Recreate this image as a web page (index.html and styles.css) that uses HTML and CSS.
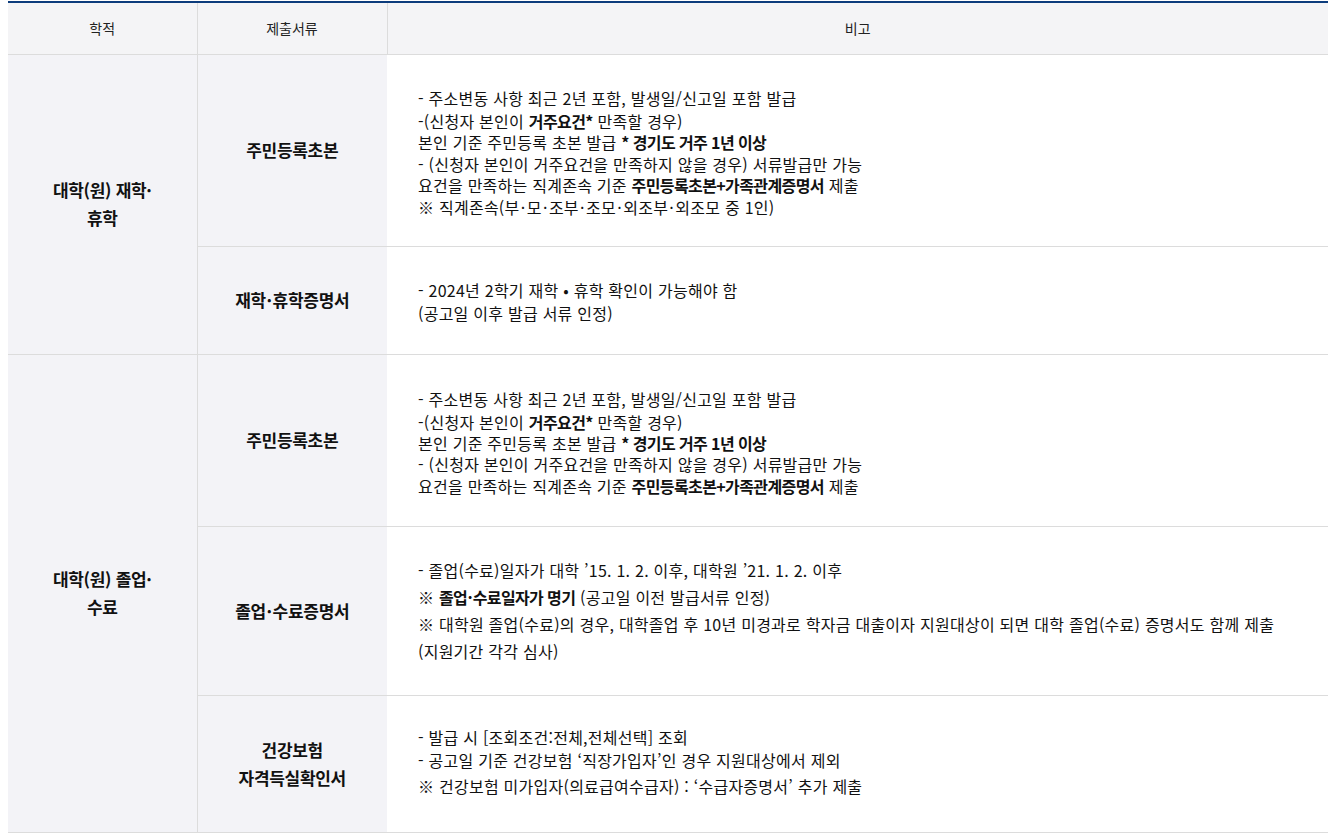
FILE: index.html
```html
<!DOCTYPE html>
<html lang="ko">
<head>
<meta charset="utf-8">
<link rel="stylesheet" href="styles.css">
</head>
<body>
<table class="doc-table">
  <thead>
    <tr>
      <th class="c1">학적</th>
      <th class="c2">제출서류</th>
      <th class="c3">비고</th>
    </tr>
  </thead>
  <tbody>
    <tr class="r1">
      <td class="grp" rowspan="2">대학(원) 재학·<br>휴학</td>
      <td class="doc">주민등록초본</td>
      <td class="note tight">
        <p>- 주소변동 사항 최근 2년 포함, 발생일/신고일 포함 발급</p>
        <p>-(신청자 본인이 <b>거주요건*</b> 만족할 경우)</p>
        <p>본인 기준 주민등록 초본 발급 <b>* 경기도 거주 1년 이상</b></p>
        <p>- (신청자 본인이 거주요건을 만족하지 않을 경우) 서류발급만 가능</p>
        <p>요건을 만족하는 직계존속 기준 <b>주민등록초본+가족관계증명서</b> 제출</p>
        <p>※ 직계존속(부&#8202;·&#8202;모&#8202;·&#8202;조부&#8202;·&#8202;조모&#8202;·&#8202;외조부&#8202;·&#8202;외조모 중 1인)</p>
      </td>
    </tr>
    <tr class="r2">
      <td class="doc">재학&#8202;·&#8202;휴학증명서</td>
      <td class="note mid">
        <p>- 2024년 2학기 재학 • 휴학 확인이 가능해야 함</p>
        <p>(공고일 이후 발급 서류 인정)</p>
      </td>
    </tr>
    <tr class="r3">
      <td class="grp" rowspan="3">대학(원) 졸업·<br>수료</td>
      <td class="doc">주민등록초본</td>
      <td class="note tight">
        <p>- 주소변동 사항 최근 2년 포함, 발생일/신고일 포함 발급</p>
        <p>-(신청자 본인이 <b>거주요건*</b> 만족할 경우)</p>
        <p>본인 기준 주민등록 초본 발급 <b>* 경기도 거주 1년 이상</b></p>
        <p>- (신청자 본인이 거주요건을 만족하지 않을 경우) 서류발급만 가능</p>
        <p>요건을 만족하는 직계존속 기준 <b>주민등록초본+가족관계증명서</b> 제출</p>
      </td>
    </tr>
    <tr class="r4">
      <td class="doc">졸업&#8202;·&#8202;수료증명서</td>
      <td class="note loose">
        <p>- 졸업(수료)일자가 대학 ’15. 1. 2. 이후, 대학원 ’21. 1. 2. 이후</p>
        <p>※ <b>졸업&#8202;·&#8202;수료일자가 명기</b> (공고일 이전 발급서류 인정)</p>
        <p>※ 대학원 졸업(수료)의 경우, 대학졸업 후 10년 미경과로 학자금 대출이자 지원대상이 되면 대학 졸업(수료) 증명서도 함께 제출</p>
        <p>(지원기간 각각 심사)</p>
      </td>
    </tr>
    <tr class="r5">
      <td class="doc">건강보험<br>자격득실확인서</td>
      <td class="note mixed">
        <p>- 발급 시 [조회조건:전체,전체선택] 조회</p>
        <p>- 공고일 기준 건강보험 ‘직장가입자’인 경우 지원대상에서 제외</p>
        <p class="last">※ 건강보험 미가입자(의료급여수급자) : ‘수급자증명서’ 추가 제출</p>
      </td>
    </tr>
  </tbody>
</table>
</body>
</html>
```

FILE: styles.css
```css
* { box-sizing: border-box; }

body {
  margin: 0;
  padding: 1px 0 0 8px;
  background: #ffffff;
  font-family: "Noto Sans CJK KR", "Noto Sans", sans-serif;
  color: #111;
}

.doc-table {
  width: 1320px;
  border-collapse: collapse;
  border-top: 2px solid #0c3c7c;
  table-layout: fixed;
}

.doc-table th {
  height: 52px;
  background: #f4f4f6;
  font-size: 14px;
  font-weight: 400;
  color: #222;
  border-bottom: 1px solid #dcdcdc;
  padding: 0;
}

.doc-table th.c1 { width: 189px; border-right: 1px solid #dcdcdc; }
.doc-table th.c2 { width: 190px; border-right: 1px solid #dcdcdc; }

.doc-table td {
  border-bottom: 1px solid #dcdcdc;
  vertical-align: middle;
}

.grp {
  background: #f3f3f7;
  border-right: 1px solid #dcdcdc;
  text-align: center;
  font-size: 17px;
  font-weight: 700;
  line-height: 28px;
  padding: 0 30px;
  letter-spacing: -0.3px;
}

.doc {
  background: #f3f3f7;
  text-align: center;
  font-size: 17px;
  font-weight: 700;
  line-height: 28px;
  padding: 0 20px;
  letter-spacing: -0.3px;
}

.note {
  background: #ffffff;
  padding: 30px 30px 30px 31px;
  font-size: 16px;
  letter-spacing: 0.25px;
}

.note p { margin: 0; white-space: nowrap; }
.note b { font-weight: 700; letter-spacing: -0.6px; }

.note.tight { padding-top: 33px; padding-bottom: 27px; }
.note.tight p { line-height: 21.4px; }
.note.tight p:first-child { margin-bottom: 1.5px; }
.note.mid { padding-top: 32px; padding-bottom: 28px; }
.note.mid p { line-height: 23px; }
.note.loose p { line-height: 27px; }
.note.mixed p { line-height: 23px; }
.note.mixed p.last { line-height: 28px; margin-top: 0; padding-bottom: 2px; }

.r1 { height: 192px; }
.r2 { height: 108px; }
.r3 { height: 172px; }
.r4 { height: 169px; }
.r5 { height: 134px; }
```
